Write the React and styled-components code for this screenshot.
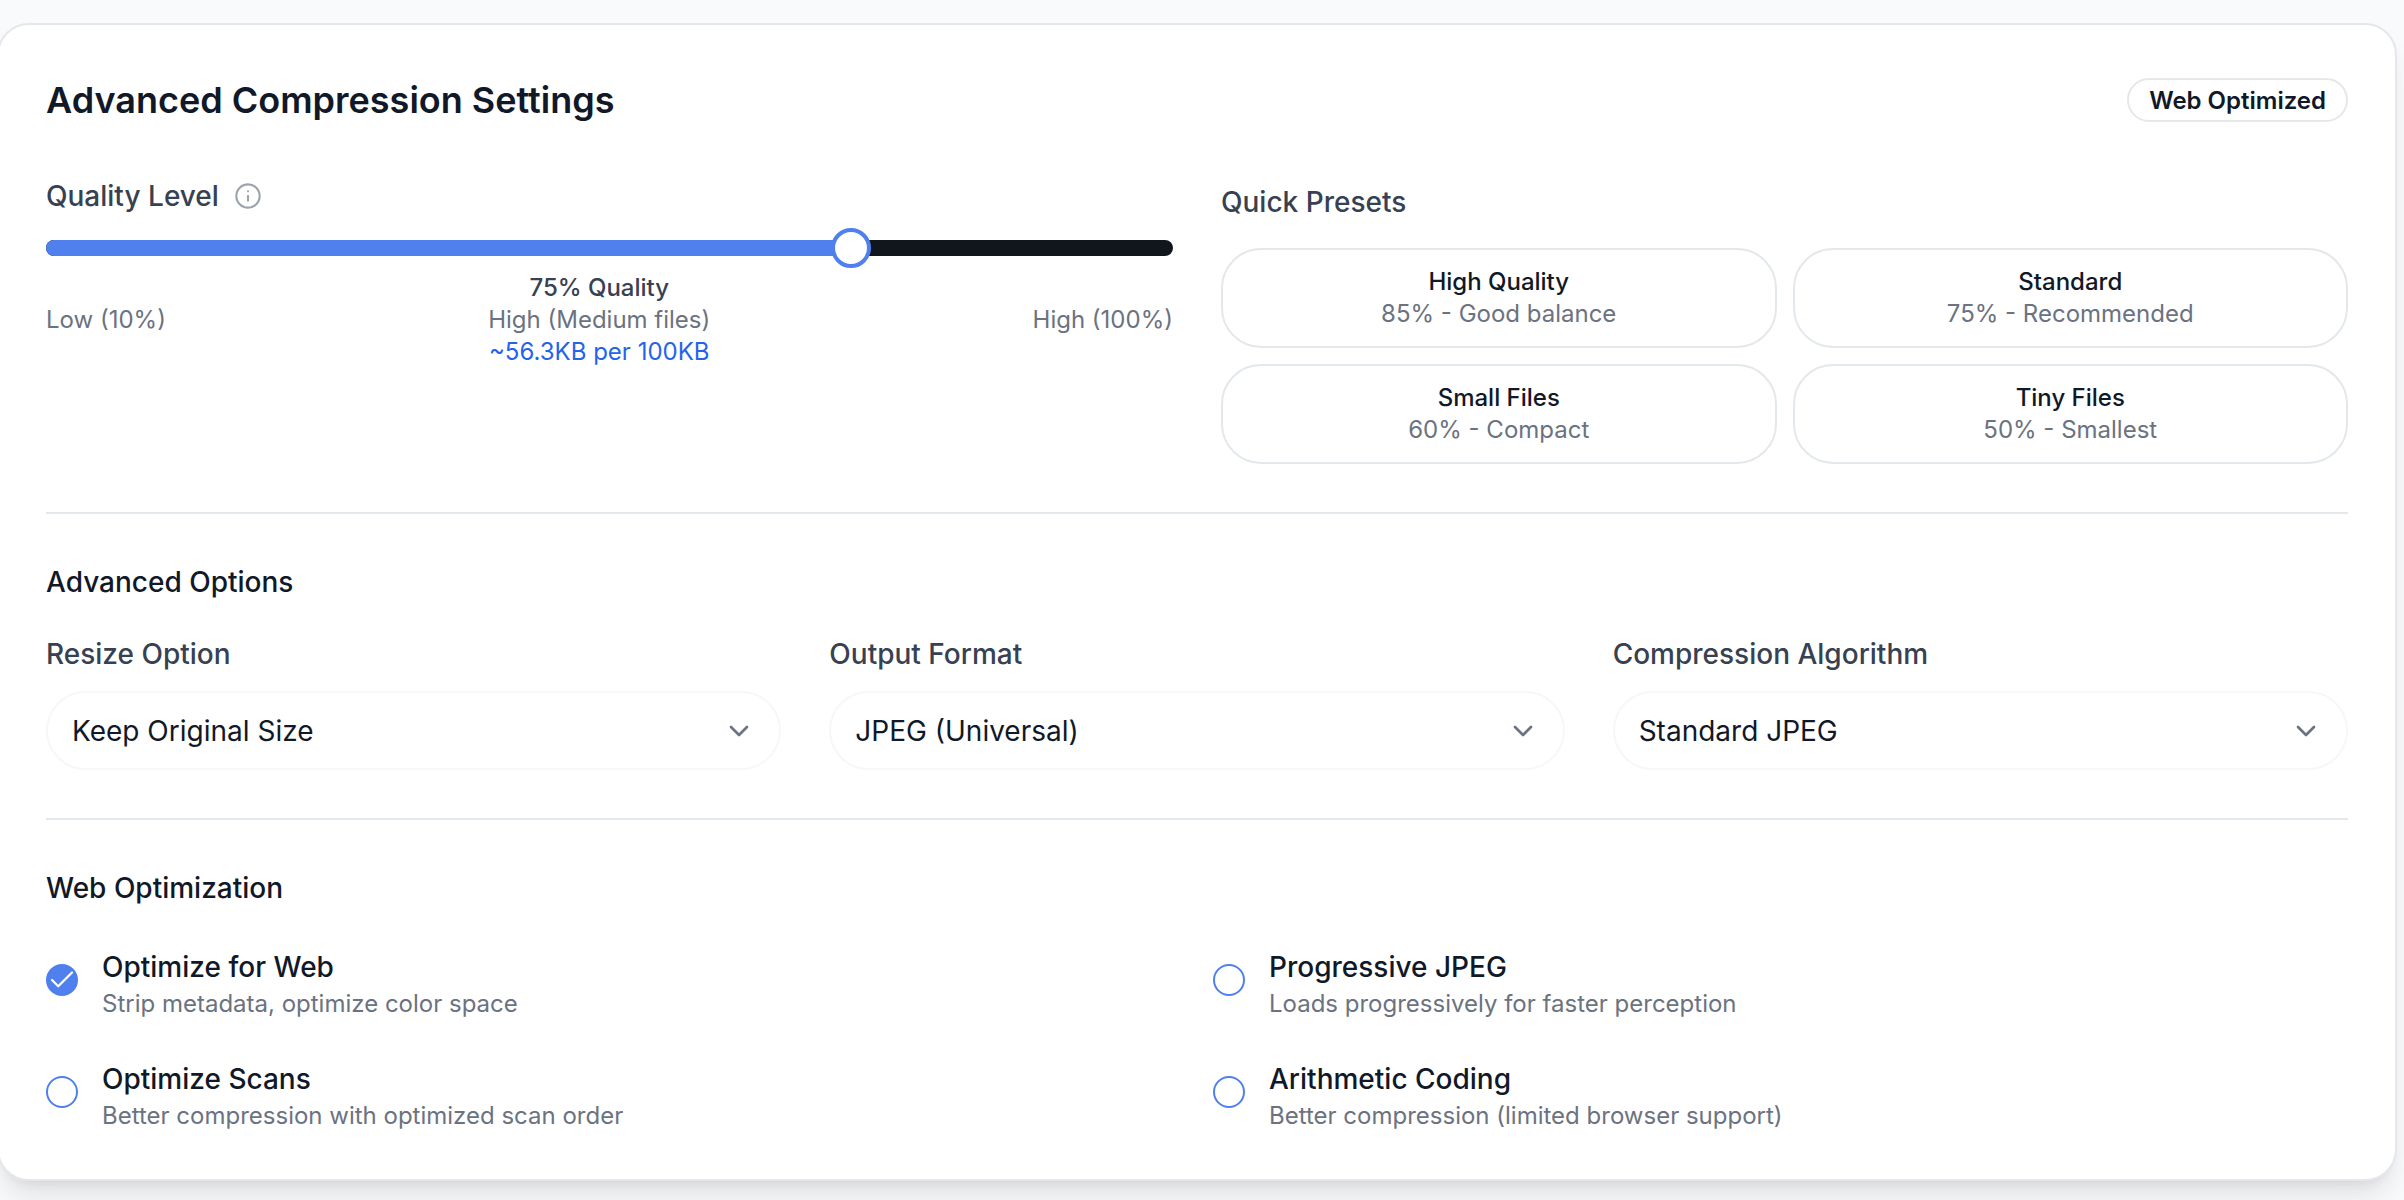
import React from 'react';
import styled, { createGlobalStyle } from 'styled-components';
import { Check, ChevronDown, Info } from 'lucide-react';

const GlobalStyle = createGlobalStyle`
  html, body {
    margin: 0;
    padding: 0;
    background: #f9fafb;
    font-family: Inter, "Liberation Sans", sans-serif;
  }
  * { box-sizing: border-box; }
`;

const Page = styled.div`
  width: 2404px;
  height: 1200px;
  padding: 23px 7px 0 0;
  overflow: hidden;
`;

const Card = styled.div`
  height: 1158px;
  margin-left: -3px;
  padding: 47px 47px 46px 47px;
  background: #fff;
  border: 2px solid #e5e7eb;
  border-radius: 32px;
  box-shadow: 0 20px 30px -6px rgba(0, 0, 0, 0.1), 0 8px 12px -8px rgba(0, 0, 0, 0.1);
`;

const Header = styled.div`
  display: flex;
  align-items: center;
  justify-content: space-between;
  height: 56px;
  margin-bottom: 48px;
`;

const Title = styled.h2`
  margin: 0;
  font-size: 36px;
  line-height: 56px;
  font-weight: 600;
  color: #111827;
`;

const Badge = styled.span`
  display: inline-flex;
  align-items: center;
  height: 44px;
  padding: 0 20px;
  border: 2px solid #e5e7eb;
  border-radius: 999px;
  font-size: 24px;
  font-weight: 600;
  color: #111827;
`;

const TopGrid = styled.div`
  display: grid;
  grid-template-columns: 1fr 1fr;
  gap: 48px;
`;

const Label = styled.div`
  font-size: 28px;
  line-height: 40px;
  font-weight: 500;
  color: #374151;
`;

const QualityLabel = styled(Label)`
  display: flex;
  align-items: center;
  gap: 15px;
  margin-bottom: 24px;
  svg { color: #9ca3af; }
`;

const Track = styled.div`
  position: relative;
  height: 16px;
  border-radius: 999px;
  background: #11161c;
`;

const Fill = styled.div`
  height: 100%;
  border-radius: 999px 0 0 999px;
  background: #4f80ed;
`;

const Thumb = styled.div`
  position: absolute;
  top: -12px;
  width: 40px;
  height: 40px;
  margin-left: -20px;
  background: #fff;
  border: 4px solid #4f80ed;
  border-radius: 50%;
`;

const Scale = styled.div`
  display: flex;
  align-items: center;
  justify-content: space-between;
  margin-top: 16px;
  font-size: 24px;
  line-height: 32px;
  color: #6b7280;
`;

const ScaleMiddle = styled.div`
  text-align: center;
`;

const ScaleValue = styled.div`
  font-weight: 500;
  color: #374151;
`;

const ScaleEstimate = styled.div`
  color: #2563eb;
`;

const PresetColumn = styled.div`
  padding-top: 6px;
`;

const PresetGrid = styled.div`
  display: grid;
  grid-template-columns: 1fr 1fr;
  gap: 16px;
  margin-top: 26px;
`;

const Preset = styled.button`
  height: 100px;
  padding: 0;
  background: #fff;
  border: 2px solid #e3e8ec;
  border-radius: 40px;
  font-family: inherit;
  text-align: center;
`;

const PresetName = styled.div`
  font-size: 24px;
  line-height: 32px;
  font-weight: 500;
  color: #111827;
`;

const PresetHint = styled.div`
  font-size: 24px;
  line-height: 32px;
  color: #6b7280;
`;

const Divider = styled.hr`
  height: 2px;
  margin: 48px 0;
  border: 0;
  background: #e3e8ec;
`;

const SectionTitle = styled.h3`
  margin: 0;
  font-size: 28px;
  line-height: 40px;
  font-weight: 500;
  color: #111827;
`;

const SelectGrid = styled.div`
  display: grid;
  grid-template-columns: repeat(3, 1fr);
  gap: 48px;
  margin-top: 32px;
`;

const SelectBox = styled.div`
  display: flex;
  align-items: center;
  justify-content: space-between;
  height: 79px;
  margin-top: 17px;
  padding: 0 24px;
  border: 2px solid #f6f7f8;
  border-radius: 40px;
  font-size: 28px;
  color: #111827;
  svg { color: #6b7280; }
`;

const OptionGrid = styled.div`
  display: grid;
  grid-template-columns: 1fr 1fr;
  column-gap: 32px;
  row-gap: 39px;
  margin-top: 39px;
`;

const Option = styled.div`
  display: flex;
  align-items: flex-start;
  gap: 24px;
`;

const Radio = styled.span`
  display: flex;
  align-items: center;
  justify-content: center;
  flex: none;
  width: 32px;
  height: 32px;
  margin-top: 17px;
  border: 2px solid #4f80ed;
  border-radius: 50%;
  background: ${props => (props.$checked ? '#4f80ed' : '#fff')};
  color: #fff;
  svg { flex: none; }
`;

const OptionName = styled.div`
  font-size: 28px;
  line-height: 40px;
  font-weight: 500;
  color: #111827;
`;

const OptionHint = styled.div`
  margin-top: 1px;
  font-size: 24px;
  line-height: 32px;
  color: #6b7280;
`;

const presets = [
  ['High Quality', '85% - Good balance'],
  ['Standard', '75% - Recommended'],
  ['Small Files', '60% - Compact'],
  ['Tiny Files', '50% - Smallest'],
];

const selects = [
  ['Resize Option', 'Keep Original Size'],
  ['Output Format', 'JPEG (Universal)'],
  ['Compression Algorithm', 'Standard JPEG'],
];

const options = [
  ['Optimize for Web', 'Strip metadata, optimize color space', true],
  ['Progressive JPEG', 'Loads progressively for faster perception', false],
  ['Optimize Scans', 'Better compression with optimized scan order', false],
  ['Arithmetic Coding', 'Better compression (limited browser support)', false],
];

const App = () => {
  const position = 71.4;
  return (
    <Page>
      <GlobalStyle />
      <Card>
        <Header>
          <Title>Advanced Compression Settings</Title>
          <Badge>Web Optimized</Badge>
        </Header>
        <TopGrid>
          <div>
            <QualityLabel>
              Quality Level
              <Info size={28} strokeWidth={1.8} />
            </QualityLabel>
            <Track>
              <Fill style={{ width: `${position}%` }} />
              <Thumb style={{ left: `${position}%` }} />
            </Track>
            <Scale>
              <span>Low (10%)</span>
              <ScaleMiddle>
                <ScaleValue>75% Quality</ScaleValue>
                <div>High (Medium files)</div>
                <ScaleEstimate>~56.3KB per 100KB</ScaleEstimate>
              </ScaleMiddle>
              <span>High (100%)</span>
            </Scale>
          </div>
          <PresetColumn>
            <Label>Quick Presets</Label>
            <PresetGrid>
              {presets.map(([name, hint]) => (
                <Preset key={name}>
                  <PresetName>{name}</PresetName>
                  <PresetHint>{hint}</PresetHint>
                </Preset>
              ))}
            </PresetGrid>
          </PresetColumn>
        </TopGrid>
        <Divider />
        <SectionTitle>Advanced Options</SectionTitle>
        <SelectGrid>
          {selects.map(([label, value]) => (
            <div key={label}>
              <Label>{label}</Label>
              <SelectBox>
                {value}
                <ChevronDown size={32} />
              </SelectBox>
            </div>
          ))}
        </SelectGrid>
        <Divider />
        <SectionTitle>Web Optimization</SectionTitle>
        <OptionGrid>
          {options.map(([name, hint, checked]) => (
            <Option key={name}>
              <Radio $checked={checked}>{checked && <Check size={30} strokeWidth={1.8} />}</Radio>
              <div>
                <OptionName>{name}</OptionName>
                <OptionHint>{hint}</OptionHint>
              </div>
            </Option>
          ))}
        </OptionGrid>
      </Card>
    </Page>
  );
};

export default App;
